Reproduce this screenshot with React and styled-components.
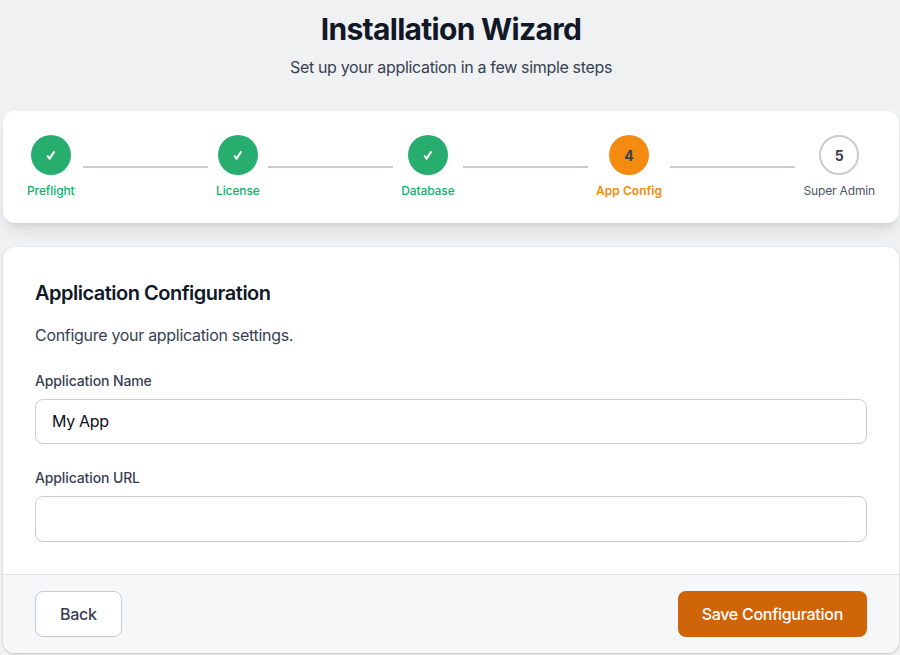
import React from 'react'
import styled, { createGlobalStyle } from 'styled-components'

const GlobalStyle = createGlobalStyle`
  * {
    box-sizing: border-box;
  }

  html,
  body {
    margin: 0;
    height: 100%;
    overflow: hidden;
    background: #f0f1f3;
    font-family: Inter, 'Liberation Sans', sans-serif;
    -webkit-font-smoothing: antialiased;
  }
`

const Page = styled.div`
  height: 655px;
  padding: 0 1px 0 3px;
  overflow: hidden;
`

const Header = styled.header`
  height: 111px;
  padding-top: 11px;
  text-align: center;
`

const Title = styled.h1`
  margin: 0;
  font-size: 30px;
  line-height: 36px;
  font-weight: 700;
  letter-spacing: -0.7px;
  color: #111827;
`

const Subtitle = styled.p`
  margin: 8px 0 0;
  font-size: 16px;
  line-height: 24px;
  letter-spacing: -0.33px;
  color: #374151;
`

const StepsCard = styled.div`
  display: flex;
  align-items: center;
  padding: 24px;
  margin-bottom: 24px;
  background: #fff;
  border-radius: 12px;
  box-shadow: 0 10px 15px -3px rgba(0, 0, 0, 0.1), 0 4px 6px -4px rgba(0, 0, 0, 0.1);
`

const Step = styled.div`
  display: flex;
  flex-direction: column;
  align-items: center;
  flex-shrink: 0;
`

const circleColors = {
  done: 'background: #27ae6f; color: #fff;',
  active: 'background: #f38b10; color: #374151;',
  pending: 'background: #fff; color: #374151; border: 2px solid #c9ccd6;',
}

const labelColors = {
  done: 'color: #10b26c; letter-spacing: -0.1px;',
  active: 'color: #f38b10; font-weight: 600; letter-spacing: 0.05px;',
  pending: 'color: #4b5563; font-weight: 400; letter-spacing: -0.15px;',
}

const Circle = styled.div`
  display: flex;
  align-items: center;
  justify-content: center;
  width: 40px;
  height: 40px;
  border-radius: 50%;
  font-size: 14px;
  font-weight: 700;
  ${({ $status }) => circleColors[$status]}
`

const StepLabel = styled.span`
  margin-top: 8px;
  font-size: 12px;
  line-height: 16px;
  font-weight: 500;
  white-space: nowrap;
  ${({ $status }) => labelColors[$status]}
`

const Connector = styled.div`
  flex: 1;
  height: 2px;
  margin: 0 8px;
  background: #c9ccd6;
`

const FormCard = styled.div`
  background: #fff;
  border-radius: 12px;
  overflow: hidden;
  box-shadow: 0 1px 3px rgba(0, 0, 0, 0.2);
`

const FormBody = styled.div`
  height: 327px;
  padding: 32px 32px 0;
`

const FormTitle = styled.h2`
  margin: 0 0 16px;
  font-size: 20px;
  line-height: 28px;
  font-weight: 600;
  letter-spacing: -0.5px;
  color: #111827;
`

const FormText = styled.p`
  margin: 0 0 23.6px;
  font-size: 16px;
  line-height: 24px;
  letter-spacing: -0.3px;
  color: #374151;
`

const Field = styled.div`
  margin-bottom: 24px;
`

const FieldLabel = styled.label`
  display: block;
  margin-bottom: 8px;
  font-size: 14px;
  line-height: 20px;
  font-weight: 500;
  letter-spacing: -0.12px;
  color: #374151;
`

const TextInput = styled.input`
  display: block;
  width: 100%;
  height: 45.5px;
  padding: 0 16px;
  font-family: inherit;
  font-size: 16px;
  letter-spacing: -0.3px;
  color: #0b0f19;
  background: #fff;
  border: 1px solid #c9ccd6;
  border-radius: 8px;
  outline: none;
`

const Footer = styled.div`
  display: flex;
  justify-content: space-between;
  padding: 16px 32px;
  background: #f6f7f9;
  border-top: 1px solid #dfe1e6;
`

const Button = styled.button`
  height: 46px;
  padding: 0 24px;
  font-family: inherit;
  font-size: 16px;
  font-weight: 500;
  letter-spacing: -0.28px;
  border-radius: 8px;
  border: ${({ $primary }) => ($primary ? 'none' : '1px solid #c9ccd6')};
  background: ${({ $primary }) => ($primary ? '#cf6409' : '#fff')};
  color: ${({ $primary }) => ($primary ? '#fff' : '#374151')};
`

const CheckMark = () => (
  <svg width="14" height="14" viewBox="0 0 14 14" fill="none" stroke="currentColor" strokeWidth="2">
    <path d="M3.2 7.6 5.6 10.6 10.4 3.4" />
  </svg>
)

const steps = [
  { label: 'Preflight', status: 'done' },
  { label: 'License', status: 'done' },
  { label: 'Database', status: 'done' },
  { label: 'App Config', status: 'active', number: 4 },
  { label: 'Super Admin', status: 'pending', number: 5 },
]

export default function App() {
  return (
    <Page>
      <GlobalStyle />
      <Header>
        <Title>Installation Wizard</Title>
        <Subtitle>Set up your application in a few simple steps</Subtitle>
      </Header>

      <StepsCard>
        {steps.map((step, index) => (
          <React.Fragment key={step.label}>
            {index > 0 && <Connector />}
            <Step>
              <Circle $status={step.status}>
                {step.status === 'done' ? <CheckMark /> : step.number}
              </Circle>
              <StepLabel $status={step.status}>{step.label}</StepLabel>
            </Step>
          </React.Fragment>
        ))}
      </StepsCard>

      <FormCard>
        <FormBody>
          <FormTitle>Application Configuration</FormTitle>
          <FormText>Configure your application settings.</FormText>
          <Field>
            <FieldLabel htmlFor="app-name">Application Name</FieldLabel>
            <TextInput id="app-name" defaultValue="My App" />
          </Field>
          <Field>
            <FieldLabel htmlFor="app-url">Application URL</FieldLabel>
            <TextInput id="app-url" />
          </Field>
        </FormBody>
        <Footer>
          <Button>Back</Button>
          <Button $primary>Save Configuration</Button>
        </Footer>
      </FormCard>
    </Page>
  )
}
